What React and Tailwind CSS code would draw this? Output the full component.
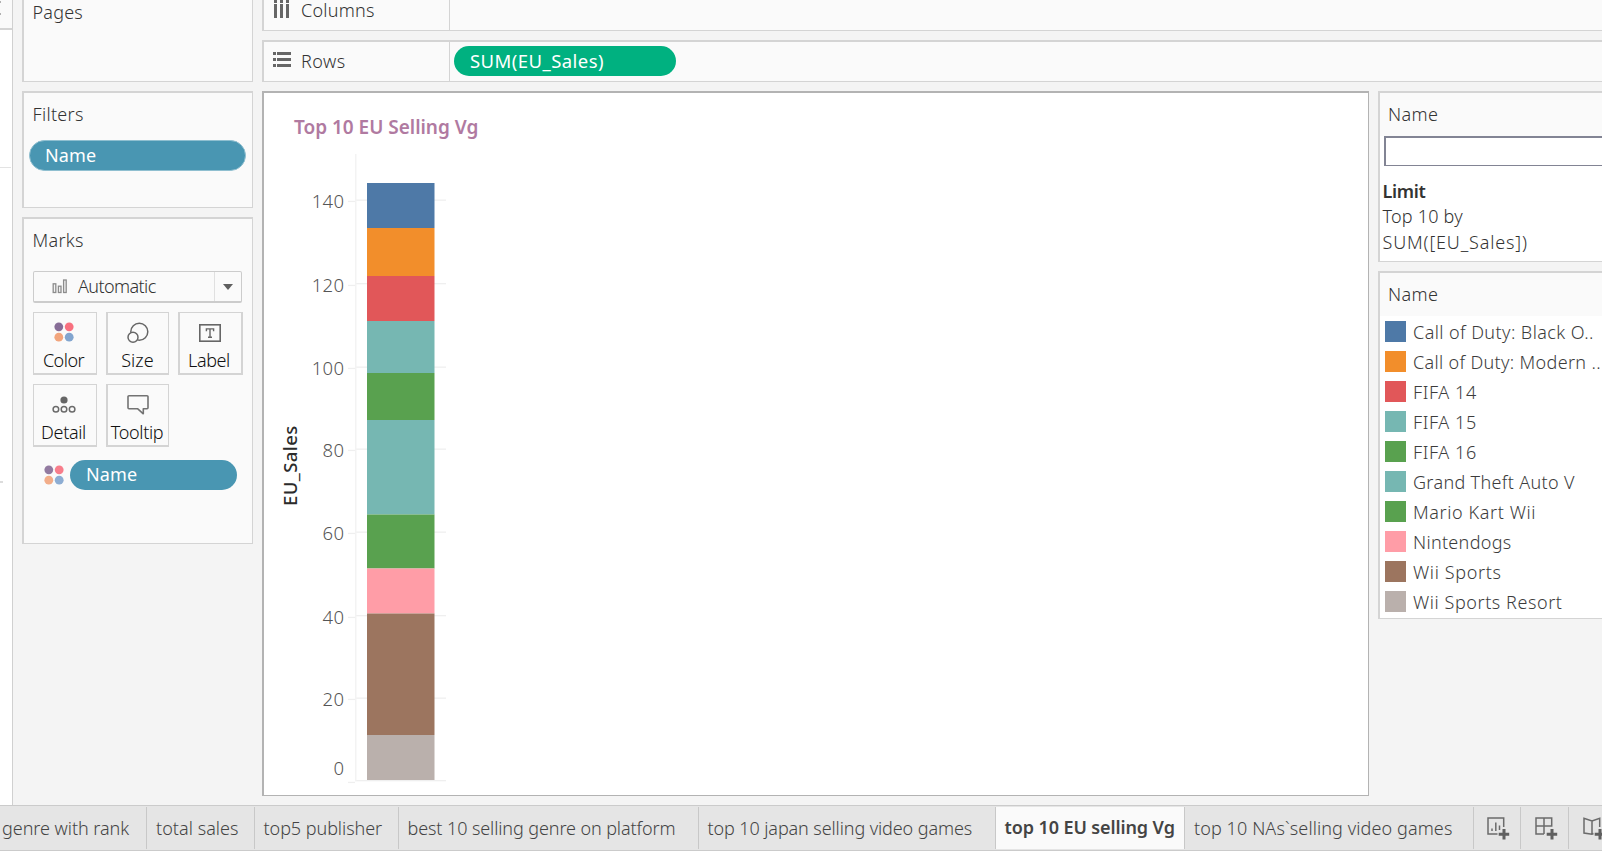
import React from 'react';

const games = [
  { name: 'Call of Duty: Black O..', swatch: 'bg-[#4e79a7]', track: 'tracking-[0.42px]' },
  { name: 'Call of Duty: Modern ..', swatch: 'bg-[#f28e2b]', track: 'tracking-[0.33px]' },
  { name: 'FIFA 14', swatch: 'bg-[#e15759]', track: 'tracking-[0.6px]' },
  { name: 'FIFA 15', swatch: 'bg-[#76b7b2]', track: 'tracking-[0.6px]' },
  { name: 'FIFA 16', swatch: 'bg-[#59a14f]', track: 'tracking-[0.6px]' },
  { name: 'Grand Theft Auto V', swatch: 'bg-[#76b7b2]', track: 'tracking-[0.33px]' },
  { name: 'Mario Kart Wii', swatch: 'bg-[#59a14f]', track: 'tracking-[0.6px]' },
  { name: 'Nintendogs', swatch: 'bg-[#ff9da7]', track: 'tracking-[0.3px]' },
  { name: 'Wii Sports', swatch: 'bg-[#9c755f]', track: 'tracking-[0.65px]' },
  { name: 'Wii Sports Resort', swatch: 'bg-[#bab0ac]', track: 'tracking-[0.57px]' },
];

const tabs = [
  { name: 'genre with rank', box: 'w-[147px] pl-[2px] tracking-[-0.04px]' },
  { name: 'total sales', box: 'w-[108px] pl-[9px] tracking-[0.05px]' },
  { name: 'top5 publisher', box: 'w-[144px] pl-[8.5px] tracking-[-0.05px]' },
  { name: 'best 10 selling genre on platform', box: 'w-[300px] pl-[8.5px] tracking-[-0.1px]' },
  { name: 'top 10 japan selling video games', box: 'w-[297px] pl-[8.5px] tracking-[-0.1px]' },
  { name: 'top 10 EU selling Vg', active: true },
  { name: 'top 10 NAs`selling video games', box: 'w-[289px] pl-[9px] tracking-[0.1px]' },
];

// Stacked segments, top to bottom: [y, height, colour]
const segments = [
  [183, 45, '#4e79a7'],
  [228, 48, '#f28e2b'],
  [276, 45, '#e15759'],
  [321, 52, '#76b7b2'],
  [373, 47, '#59a14f'],
  [420, 94.5, '#76b7b2'],
  [514.5, 54, '#59a14f'],
  [568.5, 45, '#ff9da7'],
  [613.5, 121.5, '#9c755f'],
  [735, 45, '#bab0ac'],
];

// [label, gridline y, tick y, text baseline]
const ticks = [
  ['140', 200, 201, 208],
  ['120', 283.5, 285, 292],
  ['100', 367, 368, 375],
  ['80', 449, 450, 457],
  ['60', 532, 533, 540],
  ['40', 615.5, 617, 624],
  ['20', 698, 699, 706],
  ['0', 780.5, 782, 775],
];

function ColorDots({ className }) {
  return (
    <svg width="20" height="20" viewBox="0 0 20 20" className={className}>
      <circle cx="4.8" cy="4.8" r="4.4" fill="#876d97" />
      <circle cx="15.2" cy="4.8" r="4.4" fill="#f8707f" />
      <circle cx="4.8" cy="15.2" r="4.4" fill="#f2a57d" />
      <circle cx="15.2" cy="15.2" r="4.4" fill="#82a5cf" />
    </svg>
  );
}

function Chart() {
  return (
    <svg width="240" height="640" viewBox="264 150 240 640" className="block font-light">
      {ticks.map(([label, grid, tick, base]) => (
        <g key={label}>
          <rect x="355" y={grid - 0.5} width="91" height="1.3" fill="#efefef" />
          <rect x="348" y={tick - 0.2} width="7" height="1.3" fill="#efefef" />
          <text x="344.3" y={base} textAnchor="end" fontSize="18.5" letterSpacing="0.3" fill="#555">{label}</text>
        </g>
      ))}
      <rect x="355" y="154" width="1.5" height="627" fill="#f3f3f3" />
      {segments.map(([y, h, fill]) => (
        <g key={y}>
          <rect x="367" y={y} width="67" height={h} fill={fill} />
          <rect x="434" y={y} width="1" height={h} fill={fill} opacity="0.5" />
        </g>
      ))}
      <text transform="translate(297 506) rotate(-90)" fontSize="18.5" fontWeight="500" letterSpacing="0.4" fill="#2b2b2b">EU_Sales</text>
    </svg>
  );
}

function MarkButton({ label, track, width, edge, children }) {
  return (
    <div className={`flex h-[63px] flex-col items-center border border-b-2 border-[#d4d4d4] ${width} ${edge}`}>
      <div className="flex h-[36px] w-full items-center justify-center pt-[2px]">{children}</div>
      <div className={`whitespace-nowrap leading-[23px] text-[#111] ${track}`}>{label}</div>
    </div>
  );
}

function Plus() {
  return <path d="M17 12v10.500M11.700 17.300h10.500" stroke="#5f5f5f" strokeWidth="3" />;
}

function LeftCards() {
  return (
    <div className="flex w-[231px] shrink-0 flex-col">
      <section className="h-[82px] border border-t-0 border-l-2 border-[#d4d4d4] bg-[#fafafa] pl-[8.5px] tracking-[0.2px]">
        <h2 className="leading-[24px] text-[#333]">Pages</h2>
      </section>
      <section className="mt-[9px] h-[117px] border border-l-2 border-t-2 border-[#d4d4d4] bg-[#fafafa] pt-[9px] tracking-[0.3px]">
        <h2 className="pl-[8.5px] leading-[24px] text-[#333]">Filters</h2>
        <div className="ml-[5px] mt-[14px] flex h-[31px] w-[217px] items-center rounded-full border border-[#8fbfd0] bg-[#4996b2] pl-[15px] pb-px font-normal tracking-[0.1px] text-white">Name</div>
      </section>
      <section className="mt-[9px] h-[327px] border border-l-2 border-t-2 border-[#d4d4d4] bg-[#fafafa] pl-[9px] pt-[9px]">
        <h2 className="-ml-[0.5px] leading-[24px] tracking-[0.3px] text-[#333]">Marks</h2>
        <div className="mt-[19px] flex h-[32px] w-[209px] rounded-[2px] border border-b-2 border-[#cccccc]">
          <div className="flex flex-1 items-center border-r border-[#e0e0e0] pl-[18px]">
            <svg width="16" height="16" viewBox="0 0 16 16" fill="#f4f4f4" stroke="#8c8c8c" strokeWidth="1.3">
              <rect x="1.2" y="4.8" width="2.6" height="8.7" />
              <rect x="6.4" y="7.2" width="2.6" height="6.3" />
              <rect x="11.6" y="1" width="2.6" height="12.5" />
            </svg>
            <span className="ml-[10px] tracking-[-0.6px] text-[#333]">Automatic</span>
          </div>
          <div className="flex w-[26px] items-center justify-center">
            <svg width="10" height="6" viewBox="0 0 10 6" className="mt-px"><path d="M0 0h10L5 6z" fill="#5f5f5f" /></svg>
          </div>
        </div>
        <div className="mt-[9px] flex">
          <MarkButton label="Color" track="tracking-[-0.5px] pr-[3px]" width="w-[64px]" edge="">
            <ColorDots className="mr-[2px]" />
          </MarkButton>
          <MarkButton label="Size" track="tracking-[0.1px] pr-px" width="ml-[9px] w-[63px]" edge="border-l-2">
            <svg width="22" height="22" viewBox="0 0 22 22" className="mt-[1px]" fill="none" stroke="#666" strokeWidth="1.5">
              <circle cx="12.3" cy="9.7" r="8.5" />
              <circle cx="6" cy="15.3" r="5" fill="#fafafa" />
            </svg>
          </MarkButton>
          <MarkButton label="Label" track="tracking-[-0.4px] pr-[3px]" width="ml-[9px] w-[65px]" edge="border-x-2">
            <svg width="22" height="18" viewBox="0 0 22 18" className="mr-[2px] mt-[2px]">
              <rect x="0.8" y="0.8" width="20.4" height="16.4" fill="#fafafa" stroke="#666" strokeWidth="1.6" />
              <path d="M7.4 7.2V4.9h7.2v2.3M11 4.9v8.4M9 13.3h4" fill="none" stroke="#666" strokeWidth="1.4" />
            </svg>
          </MarkButton>
        </div>
        <div className="mt-[9px] flex">
          <MarkButton label="Detail" track="tracking-[-0.35px] pr-[3px]" width="w-[64px]" edge="">
            <svg width="24" height="18" viewBox="0 0 24 18" className="mr-[2px] mt-[1px]" fill="none" stroke="#6b6b6b" strokeWidth="1.5">
              <circle cx="12" cy="4" r="3.6" fill="#666" stroke="none" />
              <circle cx="3.9" cy="13.2" r="2.8" />
              <circle cx="12" cy="13.2" r="2.8" />
              <circle cx="20.1" cy="13.2" r="2.8" />
            </svg>
          </MarkButton>
          <MarkButton label="Tooltip" track="tracking-[-0.33px] pr-[2px]" width="ml-[9px] w-[63px]" edge="border-l-2">
            <svg width="22" height="20" viewBox="0 0 22 20" className="mt-[2px]" fill="none" stroke="#737373" strokeWidth="1.6" strokeLinejoin="round">
              <path d="M2 .8h18a1 1 0 0 1 1 1v11a1 1 0 0 1-1 1h-3.7v5l-5.5-5H2a1 1 0 0 1-1-1v-11a1 1 0 0 1 1-1z" />
            </svg>
          </MarkButton>
        </div>
        <div className="mt-[13px] flex items-center">
          <ColorDots className="ml-[11px] mb-px opacity-90" />
          <div className="ml-[6px] flex h-[30px] w-[167px] items-center rounded-full bg-[#4996b2] pl-[16px] pb-px font-normal tracking-[0.1px] text-white">Name</div>
        </div>
      </section>
    </div>
  );
}

export default function App() {
  return (
    <div className="flex h-[851px] w-[1602px] flex-col overflow-hidden bg-[#f4f4f4] font-['Noto_Sans','Open_Sans',sans-serif] text-[18px] font-light">
      <main className="flex h-[805px]">
        <div className="mr-[9px] flex w-[13px] shrink-0 flex-col border-r border-[#d0d0d0] bg-white">
          <div className="h-[30px] border-b-2 border-[#d4d4d4] bg-[#fafafa]">
            <svg width="2" height="28" viewBox="0 0 2 28"><path d="M0 2h1M0 14h1" stroke="#999" strokeWidth="1.5" /></svg>
          </div>
          <div className="mr-px mt-[137px] h-px bg-[#e3e3e3]" />
          <div className="mt-[313px] h-[2px] w-[3px] bg-[#dcdcdc]" />
        </div>
        <LeftCards />
        <div className="ml-[9px] flex min-w-0 flex-1 flex-col">
          <div className="flex h-[31px] shrink-0 border-b border-l-2 border-[#d4d4d4] bg-[#fafafa] text-[#333]">
            <div className="flex w-[186px] border-r border-[#d4d4d4] pl-[9px]">
              <svg width="18" height="18" viewBox="0 0 18 18" fill="#666">
                <path d="M1 0h3v3H1zM7 0h3v3H7zM13 0h3v3h-3zM1 4h3v14H1zM7 4h3v14H7zM13 4h3v14h-3z" />
              </svg>
              <span className="ml-[10px] leading-[20px] tracking-[0.25px]">Columns</span>
            </div>
          </div>
          <div className="mt-[9px] flex h-[42px] shrink-0 border-b border-l-2 border-t-2 border-[#d4d4d4] bg-[#fafafa] text-[#333]">
            <div className="flex w-[186px] border-r border-[#d4d4d4] pl-[9px]">
              <svg width="18" height="15" viewBox="0 0 18 15" fill="#666" className="mt-[10px]">
                <path d="M0 0h3v3H0zM4 0h14v3H4zM0 6h3v3H0zM4 6h14v3H4zM0 12h3v3H0zM4 12h14v3H4z" />
              </svg>
              <span className="ml-[10px] mt-[7px] leading-[24px] tracking-[0.5px]">Rows</span>
            </div>
            <div className="ml-[4px] mt-[4px] flex h-[30px] w-[222px] items-center rounded-full bg-[#00b180] pl-[16px] text-[18.5px] font-normal tracking-[0.45px] text-white">SUM(EU_Sales)</div>
          </div>
          <div className="mt-[9px] flex">
            <section className="h-[705px] w-[1107px] border border-l-2 border-t-2 border-[#b3b3b3] bg-white">
              <h1 className="h-[57px] pl-[30px] pt-[23px] text-[19px] font-semibold leading-[23px] tracking-[-0.02px] text-[#b07aa1]">Top 10 EU Selling Vg</h1>
              <Chart />
            </section>
            <aside className="ml-[9px] flex flex-1 flex-col text-[#333]">
              <section className="h-[171px] border-b border-l-2 border-t-2 border-[#d4d4d4] bg-white">
                <h2 className="h-[43px] bg-[#fafafa] pl-[8px] pt-[9px] leading-[24px] tracking-[0.35px]">Name</h2>
                <div className="ml-[4px] h-[30px] border-b border-l-2 border-t-2 border-[#828494] bg-white" />
                <div className="pl-[2.5px] pt-[13px] leading-[25.4px]">
                  <div className="font-semibold tracking-[-0.3px]">Limit</div>
                  <div className="tracking-[0.2px]">Top 10 by</div>
                  <div className="tracking-[0.85px]">SUM([EU_Sales])</div>
                </div>
              </section>
              <section className="mt-[9px] h-[348px] border-b border-l-2 border-t-2 border-[#d4d4d4] bg-white">
                <h2 className="h-[43px] bg-[#fafafa] pl-[8px] pt-[9px] leading-[24px] tracking-[0.35px]">Name</h2>
                <ul className="pl-[5px] pt-[1px]">
                  {games.map((g) => (
                    <li key={g.name} className="flex h-[30px] items-center whitespace-nowrap">
                      <span className={`-mt-[1px] h-[21px] w-[21px] shrink-0 ${g.swatch}`} />
                      <span className={`ml-[7px] text-[#3c3c3c] ${g.track}`}>{g.name}</span>
                    </li>
                  ))}
                </ul>
              </section>
            </aside>
          </div>
        </div>
      </main>
      <nav className="flex h-[46px] border-y border-[#cbcbcb] bg-[#e5e5e5] py-px text-[#444]">
        {tabs.map((t) =>
          t.active ? (
            <div key={t.name} className="flex w-[189px] shrink-0 items-center whitespace-nowrap border-r border-[#c8c8c8] bg-[#fafafa] pb-[2px] pl-[8.5px] font-semibold tracking-[-0.1px]">{t.name}</div>
          ) : (
            <div key={t.name} className={`flex shrink-0 items-center whitespace-nowrap border-r border-[#c8c8c8] ${t.box}`}>{t.name}</div>
          )
        )}
        <div className="flex w-[47px] shrink-0 items-center border-r border-[#c8c8c8] pl-[13px] pt-px">
          <svg width="23" height="23" viewBox="0 0 23 23" fill="none" stroke="#6b6b6b" strokeWidth="1.5">
            <path d="M16.700 10V1H1v16h9.500" />
            <path d="M5 11.500v2.500M8.800 5.500v8.500M12.500 8.500v4.500" />
            <Plus />
          </svg>
        </div>
        <div className="flex w-[48px] shrink-0 items-center border-r border-[#c8c8c8] pl-[14px] pt-px">
          <svg width="23" height="23" viewBox="0 0 23 23" fill="none" stroke="#6b6b6b" strokeWidth="1.5">
            <path d="M9 17H1V1h15.700v8H1M9 1v16" />
            <Plus />
          </svg>
        </div>
        <div className="flex w-[34px] shrink-0 items-center overflow-hidden pl-[14px] pt-px">
          <svg width="23" height="23" viewBox="0 0 23 23" fill="none" stroke="#6b6b6b" strokeWidth="1.5" className="shrink-0">
            <path d="M10.500 16.500L9 17.200 1 16V1.200L9 4l7.700-2.800V10M9 4v13.200" />
            <Plus />
          </svg>
        </div>
      </nav>
    </div>
  );
}
